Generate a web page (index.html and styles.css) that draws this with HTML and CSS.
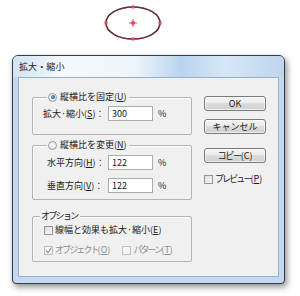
FILE: index.html
```html
<!DOCTYPE html>
<html lang="ja">
<head>
<meta charset="utf-8">
<link rel="stylesheet" href="styles.css">
</head>
<body>
<svg class="shape" width="300" height="55" viewBox="0 0 300 55">
  <ellipse cx="133" cy="23" rx="27" ry="16" fill="none" stroke="#2b1e20" stroke-width="1.6"/>
  <ellipse cx="133" cy="23" rx="27" ry="16" fill="none" stroke="#d8404f" stroke-width="0.5"/>
  <rect x="104.5" y="21.5" width="3" height="3" fill="#e24a5a"/>
  <rect x="158.5" y="21.5" width="3" height="3" fill="#e24a5a"/>
  <rect x="131.5" y="5.5" width="3" height="3" fill="#e24a5a"/>
  <rect x="131.5" y="37.5" width="3" height="3" fill="#e24a5a"/>
  <circle cx="133" cy="23" r="2" fill="#e24a5a"/>
  <line x1="129" y1="23" x2="137" y2="23" stroke="#e24a5a" stroke-width="1"/>
  <line x1="133" y1="19" x2="133" y2="27" stroke="#e24a5a" stroke-width="1"/>
</svg>
<div class="dialog">
  <div class="titlebar">拡大・縮小</div>
  <div class="panel">
    <div class="leftcol">
      <div class="group g1">
        <div class="legend"><span class="radio on"></span><span class="t">縦横比を固定(<u>U</u>)</span></div>
        <div class="row">
          <span class="lbl l1">拡大·縮小(<u>S</u>)：</span>
          <span class="input">300</span>
          <span class="pct">%</span>
        </div>
      </div>
      <div class="group g2">
        <div class="legend"><span class="radio"></span><span class="t">縦横比を変更(<u>N</u>)</span></div>
        <div class="row">
          <span class="lbl l2">水平方向(<u>H</u>)：</span>
          <span class="input">122</span>
          <span class="pct">%</span>
        </div>
        <div class="row">
          <span class="lbl l2">垂直方向(<u>V</u>)：</span>
          <span class="input">122</span>
          <span class="pct">%</span>
        </div>
      </div>
      <div class="group g3">
        <div class="legend plain"><span class="t kana2">オプション</span></div>
        <div class="crow"><span class="check"></span><span class="t">線幅と効果も拡大·縮小(<u>E</u>)</span></div>
        <div class="crow dis"><span class="check"><svg width="7" height="7" viewBox="0 0 7 7"><path d="M1 3.5 L3 5.5 L6.5 0.5" fill="none" stroke="#9a9a9a" stroke-width="1.2"/></svg></span><span class="t"><span class="kana">オブジェクト</span>(<u>O</u>)</span><span class="check c2"></span><span class="t"><span class="kana">パターン</span>(<u>T</u>)</span></div>
      </div>
    </div>
    <div class="rightcol">
      <div class="btn">OK</div>
      <div class="btn"><span class="t">キャンセル</span></div>
      <div class="btn b3"><span class="t"><span class="kana1">コピー</span>(C)</span></div>
      <div class="crow pv"><span class="check"></span><span class="t"><span class="kana">プレビュー</span>(<u>P</u>)</span></div>
    </div>
  </div>
</div>
</body>
</html>
```
FILE: styles.css
```css
html, body {
  margin: 0;
  padding: 0;
  background: #ffffff;
  width: 300px;
  height: 296px;
  overflow: hidden;
  font-family: "Noto Sans CJK JP", "Noto Sans", sans-serif;
  font-size: 9px;
  color: #1a1a1a;
}
.shape {
  display: block;
}
.t, .lbl {
  white-space: nowrap;
}
.kana {
  letter-spacing: -1.9px;
}
.kana1 {
  letter-spacing: -1.2px;
}
.kana2 {
  letter-spacing: -1.7px;
}
.dialog {
  margin-left: 12px;
  width: 273px;
  height: 229px;
  box-sizing: border-box;
  border: 1px solid #323e4c;
  border-radius: 6px 6px 4px 4px;
  background: #c4d9ef;
  box-shadow: 2px 3px 6px rgba(0, 0, 0, 0.45);
  padding: 0 5px 6px 5px;
  display: flex;
  flex-direction: column;
}
.titlebar {
  height: 21px;
  margin: 0 -5px;
  padding-left: 6px;
  border-radius: 5px 5px 0 0;
  background: linear-gradient(90deg, #d3e3f3 0%, #f4f8fc 18%, #eef4fa 45%, #b9d4ef 62%, #d6e6f6 78%, #bfd6ee 100%);
  display: flex;
  align-items: center;
  color: #222;
  font-size: 9px;
  letter-spacing: 0.1px;
}
.panel {
  flex: 1;
  box-sizing: border-box;
  border: 1px solid #98afc8;
  background: #f0f0f0;
  display: flex;
  padding: 18px 0 0 13px;
  gap: 12px;
}
.leftcol {
  width: 160px;
  margin-top: 1px;
  display: flex;
  flex-direction: column;
}
.group {
  position: relative;
  border: 1px solid #b4b4b4;
  border-radius: 2px;
  box-shadow: inset 1px 1px 0 #ffffff;
}
.g1 {
  padding: 8px 0 13px 10px;
}
.g2 {
  margin-top: 10px;
  padding: 9px 0 6px 14px;
  display: flex;
  flex-direction: column;
  gap: 8px;
}
.g3 {
  margin-top: 16px;
  padding: 7px 0 5px 11px;
  display: flex;
  flex-direction: column;
  gap: 8px;
}
.legend {
  position: absolute;
  top: -7px;
  left: 14px;
  height: 12px;
  padding: 0 2px 0 1px;
  background: #f0f0f0;
  display: flex;
  align-items: center;
  gap: 3px;
  line-height: 12px;
}
.legend.plain {
  left: 7px;
}
.radio {
  width: 9px;
  height: 9px;
  box-sizing: border-box;
  border-radius: 50%;
  border: 1px solid #9a9a9a;
  background: radial-gradient(circle at 40% 40%, #ffffff, #dcdcdc);
  position: relative;
}
.radio.on::after {
  content: "";
  position: absolute;
  left: 1.5px;
  top: 1.5px;
  width: 4px;
  height: 4px;
  border-radius: 50%;
  background: radial-gradient(circle at 40% 35%, #6fa7dc, #123a66);
}
.row {
  display: flex;
  align-items: center;
  height: 15px;
}
.lbl {
  line-height: 12px;
}
.l1 {
  width: 65px;
}
.l2 {
  width: 61px;
}
.input {
  width: 45px;
  height: 15px;
  box-sizing: border-box;
  border: 1px solid #a8acb4;
  background: #fff;
  padding-left: 3px;
  line-height: 13px;
}
.pct {
  margin-left: 5px;
}
.crow {
  display: flex;
  align-items: center;
  height: 12px;
  line-height: 12px;
}
.check {
  width: 9px;
  height: 9px;
  flex: none;
  box-sizing: border-box;
  border: 1px solid #959595;
  background: linear-gradient(135deg, #dedede, #f8f8f8);
  margin-right: 2px;
  display: flex;
  align-items: center;
  justify-content: center;
}
.dis {
  color: #8d8d8d;
}
.dis .check {
  border-color: #c0c0c0;
  background: #f4f4f4;
}
.check.c2 {
  margin-left: 12px;
}
.rightcol {
  width: 62px;
  display: flex;
  flex-direction: column;
}
.btn {
  height: 15px;
  box-sizing: border-box;
  border: 1px solid #7a7a7a;
  border-radius: 3px;
  background: linear-gradient(180deg, #f4f4f4 0%, #ececec 45%, #dcdcdc 50%, #d0d0d0 100%);
  box-shadow: inset 0 0 0 1px rgba(255, 255, 255, 0.6);
  display: flex;
  align-items: center;
  justify-content: center;
  line-height: 12px;
  margin-bottom: 8px;
}
.b3 {
  margin-top: 6px;
}
.pv {
  margin-top: 2px;
}
```
